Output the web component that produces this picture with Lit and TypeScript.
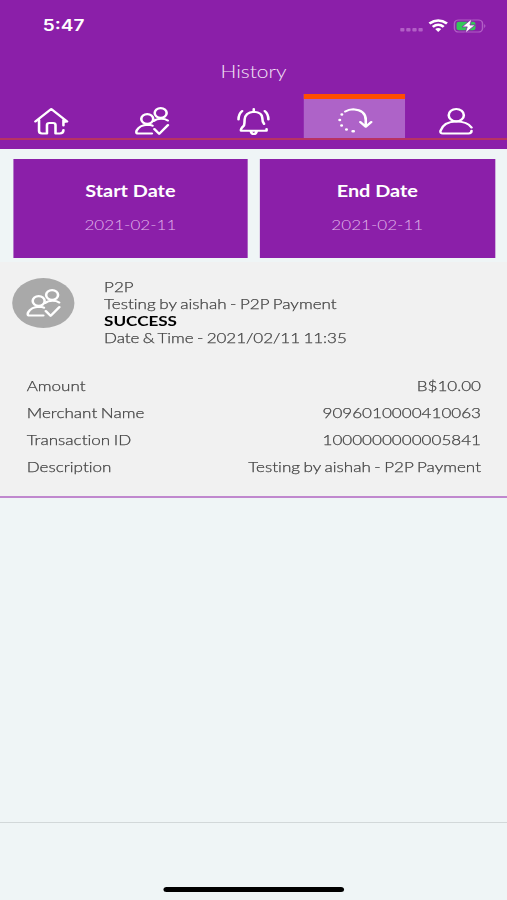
import { LitElement, html, css, svg } from "lit";
import { customElement } from "lit/decorators.js";

const people = svg`
  <circle cx="9.700" cy="12" r="4.900"/>
  <path d="M1.500 26.500 Q.3 26 1 23.500 Q3.500 18 10 17.800 Q12.500 17.800 14 18.700 M1.500 26.500 H13.500"/>
  <circle cx="20.700" cy="6" r="4.900"/>
  <path d="M15 14 Q17 11.800 21 11.800 Q24.500 11.800 26.500 13.500 M15.500 22 L19.500 26.800 L26.700 18"/>`;

const tabs = [
  svg`<path d="M1 14.500 L14 2 L27 14.500 L24.500 15 M4 13 V24 Q4 26.500 6.500 26.500 H10.500 V18 Q10.500 16 12.500 16 H15.500 Q17.500 16 17.500 18 V26.500 H21 Q24 26.500 24 23 M24 13 V18.500"/>`,
  people,
  svg`<path d="M6 18.500 Q6.500 16 6.500 12.500 Q7 5.500 14 4.800 Q21 5.500 21 11 Q21 15 22.500 17 M6 18.500 Q3 22 3.500 23.800 H24.500 V22 M14 2 V4.500 M11.500 24 Q12 27 14 27 Q16 27 16.500 24 M4.500 4 Q1.500 7 1.500 12.500 M23 4 Q26 7 26 12.500"/>`,
  svg`<path d="M6 4.500 Q9 2.200 12.500 2.200 Q22.800 3 22.800 13 V19 M18.300 15 L22.800 19.700 L27.300 15"/><path class="dots" d="M3.200 7.500 v.1 M1.500 13 v.1 M3 18.500 v.1 M7 22.500 v.1 M12.200 24.300 h.6"/>`,
  svg`<circle cx="14" cy="8.200" r="6.200"/><path d="M26.500 20.500 Q23 14.500 14 14.500 Q3.500 14.500 1 24 Q.7 26.500 3 26.500 H24 Q26.500 26.500 26.500 23.800"/>`,
];

const details = [
  ["Amount", "B$10.00"],
  ["Merchant Name", "9096010000410063"],
  ["Transaction ID", "1000000000005841"],
  ["Description", "Testing by aishah - P2P Payment"],
];

@customElement("app-root")
export class AppRoot extends LitElement {
  static styles = css`
    :host { display: block; width: 507px; height: 900px; overflow: hidden; background: #eff5f6; }
    * { box-sizing: border-box; }
    .screen {
      width: 415.574px; height: 900px; transform: scaleX(1.22); transform-origin: 0 0;
      display: flex; flex-direction: column; font-family: Lato, sans-serif;
      color: #444; font-size: 14px; line-height: 17px; font-weight: 300;
      font-variant-ligatures: none;
    }
    .header { height: 149px; background: #8b1fa9; color: #fff; flex: none; }
    .status { height: 52px; padding: 0 17px 0 35px; display: flex; justify-content: space-between; align-items: center; }
    .time { font: 600 15.600px/20px Inter, sans-serif; }
    .indicators { display: flex; align-items: center; }
    .title { height: 42px; line-height: 39px; text-align: center; font-size: 17.200px; color: #f3e3f6; }
    .tabs { display: grid; grid-template-columns: repeat(5, 1fr); height: 46px; border-bottom: 2px solid #b83262; }
    .tab { display: flex; justify-content: center; padding-top: 13px; }
    .tab.active { background: #ae63c8; border-top: 5px solid #ff4e00; padding-top: 8px; }
    .icon { width: 28px; height: 28px; fill: none; stroke: #fff; stroke-width: 2.100; stroke-linecap: round; stroke-linejoin: round; overflow: visible; }
    .dots { stroke-width: 2.500; }
    .dates { display: grid; grid-template-columns: 1fr 1fr; gap: 9.800px; padding: 10.400px 10px 3.600px 10.600px; flex: none; }
    .date { height: 99px; background: #8b1fa9; color: #e0b8e9; text-align: center; padding-top: 22px; }
    .date b { display: block; color: #fff; font-weight: 700; font-size: 16.300px; height: 34px; line-height: 20px; }
    .date span { display: block; line-height: 20px; }
    .record { height: 236px; flex: none; background: #f1f1f1; border-bottom: 2px solid #c088ce; padding: 16px 21.300px 0 10.400px; word-spacing: -.9px; -webkit-text-stroke: .25px; }
    .summary { display: flex; gap: 23.900px; height: 94px; }
    .avatar { width: 51px; height: 50px; border-radius: 50%; background: #a9a9a9; display: flex; align-items: center; justify-content: center; }
    .summary b { color: #000; font-weight: 700; -webkit-text-stroke: 0; }
    .stamp { letter-spacing: -.07px; }
    .row { display: flex; justify-content: space-between; padding-left: 11.500px; height: 27px; line-height: 27px; }
    .space { height: 325px; flex: none; border-bottom: 1px solid #d2d8d9; }
    .footer { flex: 1; display: flex; justify-content: center; align-items: flex-end; padding-bottom: 8px; }
    .home { width: 148px; height: 5px; border-radius: 3px; background: #000; }
  `;

  render() {
    return html`<div class="screen">
      <div class="header">
        <div class="status">
          <span class="time">5:47</span>
          <div class="indicators">
            <svg width="71" height="18" viewBox="0 0 71 18">
              <g fill="#b25fc6"><rect x="0" y="11" width="3.500" height="3.500" rx=".8"/><rect x="5" y="11" width="3.500" height="3.500" rx=".8"/><rect x="10" y="11" width="3.500" height="3.500" rx=".8"/><rect x="15" y="11" width="3.500" height="3.500" rx=".8"/></g>
              <g fill="none" stroke="#fff" stroke-width="2.300"><path d="M24 6.500 Q31.200 .5 38.400 6.500"/><path d="M26.700 9.800 Q31.200 5.800 35.700 9.800"/></g>
              <path fill="#fff" d="M28.700 12 Q31.200 9.800 33.700 12 L31.200 15z"/>
              <rect x="44.500" y="3" width="23" height="12" rx="3.500" fill="none" stroke="#b25fc6" stroke-width="1.200"/>
              <rect x="46.200" y="4.800" width="15.500" height="8.400" rx="2" fill="#34c759"/>
              <path d="M68.800 7 Q71 9 68.800 11z" fill="#b25fc6"/>
              <path d="M58.800 1.800 L50.800 9.900 H55 L53.200 16.200 L61.500 8 H57.200z" fill="#fff" stroke="#8b1fa9" stroke-width=".7"/>
            </svg>
          </div>
        </div>
        <div class="title">History</div>
        <div class="tabs">${tabs.map((t, i) => html`<div class="tab ${i === 3 ? "active" : ""}"><svg class="icon" viewBox="0 0 28 28">${t}</svg></div>`)}</div>
      </div>
      <div class="dates">
        <div class="date"><b>Start Date</b><span>2021-02-11</span></div>
        <div class="date"><b>End Date</b><span>2021-02-11</span></div>
      </div>
      <div class="record">
        <div class="summary">
          <div class="avatar"><svg class="icon" viewBox="0 0 28 28">${people}</svg></div>
          <div>
            <div>P2P</div>
            <div>Testing by aishah - P2P Payment</div>
            <b>SUCCESS</b>
            <div class="stamp">Date &amp; Time - 2021/02/11 11:35</div>
          </div>
        </div>
        ${details.map(([k, v]) => html`<div class="row"><span>${k}</span><span>${v}</span></div>`)}
      </div>
      <div class="space"></div>
      <div class="footer"><div class="home"></div></div>
    </div>`;
  }
}
